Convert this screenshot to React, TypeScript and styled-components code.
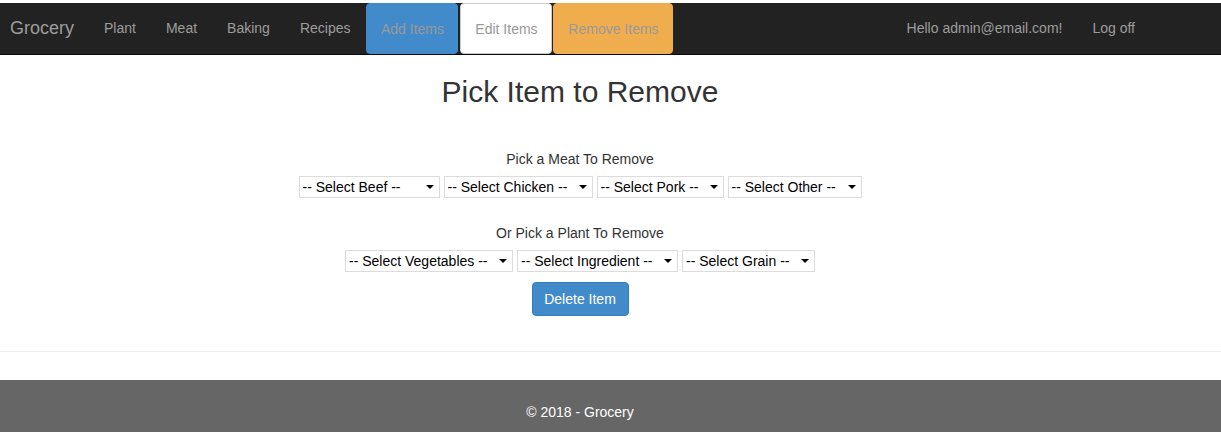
import React from "react";
import styled, { createGlobalStyle } from "styled-components";

const GlobalStyle = createGlobalStyle`
  html, body { margin: 0; padding: 0; background: #fff; }
  body {
    font-family: "Liberation Sans", Arial, Helvetica, sans-serif;
    font-size: 14px;
    line-height: 20px;
    color: #333;
  }
  * { box-sizing: border-box; }
`;

const Page = styled.div`
  padding-top: 3px;
  width: 1221px;
  height: 432px;
  overflow: hidden;
  display: flex;
  flex-direction: column;
`;

const Navbar = styled.nav`
  height: 52px;
  flex-shrink: 0;
  background: #222;
  border-bottom: 1px solid #080808;
  display: flex;
  align-items: stretch;
  padding-left: 10px;
`;

const Brand = styled.a`
  font-size: 18px;
  line-height: 20px;
  color: #9d9d9d;
  padding: 15px 15px 15px 0;
  text-decoration: none;
`;

const NavList = styled.ul`
  list-style: none;
  margin: 0;
  padding: 0;
  display: flex;
  align-items: stretch;
`;

const RightNav = styled(NavList)`
  margin-left: auto;
  margin-right: 71px;
`;

const NavLink = styled.a`
  display: block;
  padding: 15px;
  line-height: 20px;
  color: #9d9d9d;
  text-decoration: none;
  white-space: nowrap;
`;

const NavButton = styled.a<{ $bg: string; $border?: string; $ml?: number; $w: number }>`
  display: block;
  width: ${(p) => p.$w}px;
  height: 51px;
  padding-top: 15px;
  text-align: center;
  line-height: 20px;
  color: #999;
  text-decoration: none;
  white-space: nowrap;
  background: ${(p) => p.$bg};
  border: 1px solid ${(p) => p.$border ?? p.$bg};
  border-radius: 4px;
  margin-left: ${(p) => p.$ml ?? 0}px;
`;

const Main = styled.main`
  width: 1160px;
  text-align: center;
  display: flex;
  flex-direction: column;
  align-items: center;
`;

const Title = styled.h2`
  font-size: 30px;
  font-weight: 500;
  line-height: 33px;
  margin: 20px 0 0;
  color: #333;
`;

const Label = styled.div<{ $mt: number }>`
  margin-top: ${(p) => p.$mt}px;
  line-height: 20px;
  color: #333;
`;

const SelectRow = styled.div`
  display: flex;
  gap: 4px;
  margin-top: 7px;
`;

const SelectWrap = styled.div<{ $w: number }>`
  position: relative;
  width: ${(p) => p.$w}px;
  height: 22px;
  &::after {
    content: "";
    position: absolute;
    right: 6px;
    top: 9px;
    border-left: 4px solid transparent;
    border-right: 4px solid transparent;
    border-top: 4px solid #000;
    pointer-events: none;
  }
`;

const Select = styled.select`
  appearance: none;
  -webkit-appearance: none;
  width: 100%;
  height: 100%;
  border: 1px solid #dcdcdc;
  border-radius: 0;
  background: #fff;
  font-family: "Liberation Sans", Arial, sans-serif;
  font-size: 14px;
  color: #000;
  padding: 0 0 0 3px;
  outline: none;
`;

const DeleteButton = styled.button`
  margin-top: 10px;
  width: 97px;
  height: 34px;
  padding: 0;
  background: #428bca;
  border: 1px solid #357ebd;
  border-radius: 4px;
  color: #fff;
  font-family: "Liberation Sans", Arial, sans-serif;
  font-size: 14px;
  line-height: 20px;
`;

const Rule = styled.hr`
  width: 100%;
  margin: 35px 0 0;
  border: 0;
  border-top: 1px solid #eee;
`;

const Footer = styled.footer`
  margin-top: 28px;
  flex: 1;
  background: #666;
  padding-top: 22px;
`;

const FooterText = styled.p`
  margin: 0;
  width: 1160px;
  text-align: center;
  color: #fff;
`;

const meat = [
  { label: "-- Select Beef --", w: 141 },
  { label: "-- Select Chicken --", w: 149 },
  { label: "-- Select Pork --", w: 127 },
  { label: "-- Select Other --", w: 134 },
];

const plant = [
  { label: "-- Select Vegetables --", w: 168 },
  { label: "-- Select Ingredient --", w: 161 },
  { label: "-- Select Grain --", w: 133 },
];

function Dropdown({ label, w }: { label: string; w: number }) {
  return (
    <SelectWrap $w={w}>
      <Select defaultValue="">
        <option value="">{label}</option>
      </Select>
    </SelectWrap>
  );
}

export default function App() {
  return (
    <>
      <GlobalStyle />
      <Page>
        <Navbar>
          <Brand>Grocery</Brand>
          <NavList>
            <li><NavLink>Plant</NavLink></li>
            <li><NavLink>Meat</NavLink></li>
            <li><NavLink>Baking</NavLink></li>
            <li><NavLink>Recipes</NavLink></li>
          </NavList>
          <NavList>
            <li><NavButton $bg="#428bca" $ml={1} $w={92}>Add Items</NavButton></li>
            <li><NavButton $bg="#fff" $border="#ccc" $ml={2} $w={92}>Edit Items</NavButton></li>
            <li><NavButton $bg="#f0ad4e" $ml={1} $w={120}>Remove Items</NavButton></li>
          </NavList>
          <RightNav>
            <li><NavLink>Hello admin@email.com!</NavLink></li>
            <li><NavLink>Log off</NavLink></li>
          </RightNav>
        </Navbar>
        <Main>
          <Title>Pick Item to Remove</Title>
          <Label $mt={41}>Pick a Meat To Remove</Label>
          <SelectRow>
            {meat.map((m) => (
              <Dropdown key={m.label} {...m} />
            ))}
          </SelectRow>
          <Label $mt={25}>Or Pick a Plant To Remove</Label>
          <SelectRow>
            {plant.map((m) => (
              <Dropdown key={m.label} {...m} />
            ))}
          </SelectRow>
          <DeleteButton>Delete Item</DeleteButton>
        </Main>
        <Rule />
        <Footer>
          <FooterText>© 2018 - Grocery</FooterText>
        </Footer>
      </Page>
    </>
  );
}
